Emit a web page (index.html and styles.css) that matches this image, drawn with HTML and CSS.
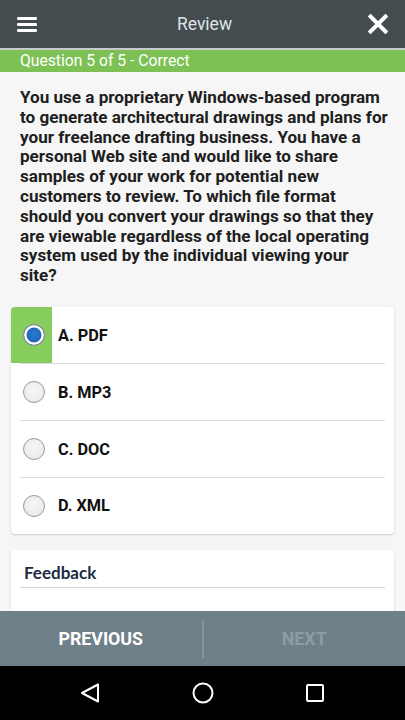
FILE: index.html
```html
<!DOCTYPE html>
<html>
<head>
<meta charset="utf-8">
<link rel="stylesheet" href="styles.css">
</head>
<body>
<div class="app">
  <header class="topbar">
    <svg class="menu-icon" width="20" height="16" viewBox="0 0 20 16"><rect x="0" y="1" width="20" height="3" rx="1.2" fill="#fff"/><rect x="0" y="7" width="20" height="3" rx="1.2" fill="#fff"/><rect x="0" y="13" width="20" height="3" rx="1.2" fill="#fff"/></svg>
    <div class="title">Review</div>
    <svg class="close-icon" width="20" height="20" viewBox="0 0 20 20"><path d="M2.5 2.5 L17.5 17.5 M17.5 2.5 L2.5 17.5" stroke="#fff" stroke-width="4" stroke-linecap="square"/></svg>
  </header>
  <div class="status">Question 5 of 5 - Correct</div>
  <main class="content">
    <p class="question">You use a proprietary Windows-based program to generate architectural drawings and plans for your freelance drafting business. You have a personal Web site and would like to share samples of your work for potential new customers to review. To which file format should you convert your drawings so that they are viewable regardless of the local operating system used by the individual viewing your<br>site?</p>
    <div class="card options">
      <div class="option correct">
        <div class="radio-cell"><span class="radio checked"></span></div>
        <div class="label">A. PDF</div>
      </div>
      <div class="option">
        <div class="radio-cell"><span class="radio"></span></div>
        <div class="label">B. MP3</div>
      </div>
      <div class="option">
        <div class="radio-cell"><span class="radio"></span></div>
        <div class="label">C. DOC</div>
      </div>
      <div class="option last">
        <div class="radio-cell"><span class="radio"></span></div>
        <div class="label">D. XML</div>
      </div>
    </div>
    <div class="card feedback">
      <div class="feedback-title">Feedback</div>
    </div>
  </main>
  <footer class="actions">
    <button class="btn">PREVIOUS</button>
    <span class="divider"></span>
    <button class="btn disabled">NEXT</button>
  </footer>
  <nav class="sysnav">
    <svg width="22" height="22" viewBox="0 0 22 22"><path d="M19 2.5 L19 19.5 L3 11 Z" fill="none" stroke="#fff" stroke-width="2" stroke-linejoin="round"/></svg>
    <svg width="22" height="22" viewBox="0 0 22 22"><circle cx="11" cy="11" r="9.5" fill="none" stroke="#fff" stroke-width="2"/></svg>
    <svg width="22" height="22" viewBox="0 0 22 22"><rect x="3" y="3" width="16" height="16" rx="1" fill="none" stroke="#fff" stroke-width="2"/></svg>
  </nav>
</div>
</body>
</html>
```
FILE: styles.css
```css
* { box-sizing: border-box; }
html, body { margin: 0; padding: 0; }
body {
  font-family: Roboto, "Liberation Sans", sans-serif;
  background: #f6f6f6;
}
.app {
  width: 405px;
  height: 720px;
  display: flex;
  flex-direction: column;
  overflow: hidden;
}
.topbar {
  flex: none;
  height: 50px;
  background: #434d50;
  display: flex;
  align-items: center;
  justify-content: space-between;
  padding: 0 17px;
  border-bottom: 2px solid #c5cbcc;
}
.title {
  color: #dfe3e4;
  font-size: 17.5px;
  font-weight: 400;
  margin-left: 4px;
}
.status {
  flex: none;
  height: 22px;
  background: #7dc155;
  color: #fff;
  font-size: 15.7px;
  line-height: 22px;
  padding-left: 20px;
}
.content {
  flex: 1;
  overflow: hidden;
  padding: 16px 11px 0;
}
.question {
  margin: 0 5px 21px 9px;
  font-size: 17.1px;
  line-height: 19.8px;
  font-weight: 700;
  color: #1e1e1e;
}
.card {
  background: #fff;
  border-radius: 4px;
  box-shadow: 0 1px 2px rgba(0,0,0,0.18);
}
.options { margin-bottom: 16px; }
.option {
  height: 57px;
  display: flex;
  align-items: center;
  position: relative;
}
.option::after {
  content: "";
  position: absolute;
  left: 9px;
  right: 9px;
  bottom: 0;
  height: 1px;
  background: #dcdcdc;
}
.option.last::after { display: none; }
.option.last { height: 56px; }
.radio-cell {
  width: 41px;
  height: 56px;
  align-self: flex-start;
  display: flex;
  align-items: center;
  justify-content: center;
  padding-left: 4px;
}
.option.correct .radio-cell {
  background: #86cd5e;
  border-top-left-radius: 4px;
}
.radio {
  width: 22px;
  height: 22px;
  border-radius: 50%;
  border: 1px solid #9a9a9a;
  background: radial-gradient(circle at 50% 40%, #f7f7f7 0%, #e6e6e6 100%);
}
.radio.checked {
  border-color: #8f8f8f;
  background: radial-gradient(circle at 50% 45%, #2b7ad0 0%, #1a5fae 70%);
  box-shadow: inset 0 0 0 2.5px #fff;
}
.label {
  margin-left: 6px;
  font-size: 16.3px;
  font-weight: 700;
  color: #111;
}
.feedback { height: 70px; }
.feedback-title {
  margin: 0 9px;
  padding: 12px 4px 0;
  height: 38px;
  font-family: Lato, Roboto, sans-serif;
  font-weight: 700;
  font-size: 17px;
  color: #1c2a45;
  border-bottom: 1px solid #d6d6d6;
}
.actions {
  flex: none;
  height: 55px;
  background: #6f8089;
  display: flex;
  align-items: center;
}
.btn {
  flex: 1;
  background: none;
  border: none;
  font-family: Roboto, sans-serif;
  font-weight: 700;
  font-size: 17.8px;
  color: #fff;
  height: 55px;
  padding: 0;
}
.btn.disabled { color: #8d9ca4; }
.divider {
  width: 2px;
  height: 38px;
  background: #84949c;
}
.sysnav {
  flex: none;
  height: 54px;
  background: #000;
  display: flex;
  align-items: center;
  justify-content: space-between;
  padding: 0 79px;
}
```
